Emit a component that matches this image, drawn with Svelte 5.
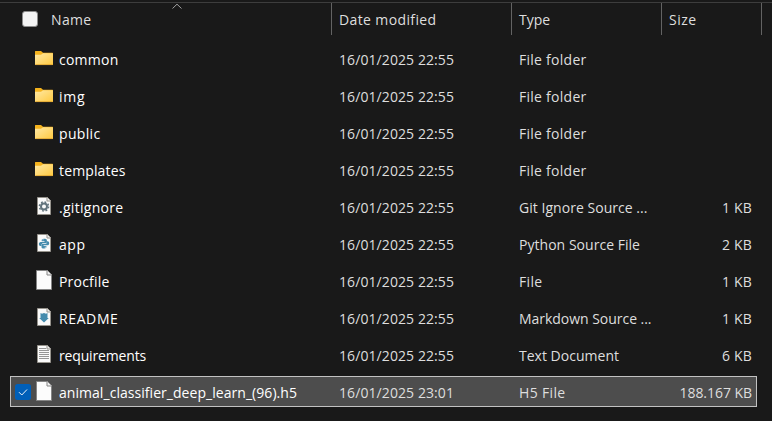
<script>
  const columns = [
    { label: 'Name', w: 40.5 },
    { label: 'Date modified', w: 97.5 },
    { label: 'Type', w: 31 },
    { label: 'Size', w: 27.5 }
  ];
  const date = '16/01/2025 22:55';
  const folder = { icon: 'folder', date, type: 'File folder', tw: 67.5, size: '' };
  const files = [
    { ...folder, name: 'common', w: 59.5 },
    { ...folder, name: 'img', w: 26.5 },
    { ...folder, name: 'public', w: 41.5 },
    { ...folder, name: 'templates', w: 66.5 },
    { icon: 'gear', name: '.gitignore', w: 64.5, date, type: 'Git Ignore Source ...', tw: 128.5, size: '1 KB' },
    { icon: 'python', name: 'app', w: 26.5, date, type: 'Python Source File', tw: 121, size: '2 KB' },
    { icon: 'blank', name: 'Procfile', w: 50.5, date, type: 'File', tw: 23.5, size: '1 KB' },
    { icon: 'markdown', name: 'README', w: 59.5, date, type: 'Markdown Source ...', tw: 132.5, size: '1 KB' },
    { icon: 'text', name: 'requirements', w: 87, date, type: 'Text Document', tw: 100, size: '6 KB' },
    { icon: 'blank', name: 'animal_classifier_deep_learn_(96).h5', w: 238, date: '16/01/2025 23:01', type: 'H5 File', tw: 46.5, size: '188.167 KB', selected: true }
  ];

  // Spreads the letters of a label over the given width.
  function fit(node, width) {
    const natural = node.getBoundingClientRect().width;
    if (natural) node.style.letterSpacing = `${(width - natural) / node.textContent.length}px`;
  }
</script>

{#snippet icon(kind)}
  {#if kind === 'folder'}
    <svg width="20" height="20" viewBox="0 0 20 20">
      <defs>
        <linearGradient id="fold" x1="0" y1="0" x2="1" y2="1">
          <stop offset="0" stop-color="#ffe9a6" /><stop offset="1" stop-color="#ffc93f" />
        </linearGradient>
      </defs>
      <path d="M1 3.5Q1 3 1.5 3H7l2 1.7h9.5q.5 0 .5.5V9H1Z" fill="#f5b31d" />
      <path d="M1 6.7h6L9 5.2h9.5q.5 0 .5.5v10.8q0 .5-.5.5h-17q-.5 0-.5-.5Z" fill="url(#fold)" />
      <path d="M1.3 16.6h17.4" stroke="#dda12e" stroke-width=".8" />
    </svg>
  {:else if kind === 'blank'}
    <svg width="20" height="20" viewBox="-1 0 20 20">
      <path d="M1.5 .5h11l4 4v15h-15Z" fill="#fcfcfc" stroke="#858585" />
      <path d="M12 .5V5h4.5" fill="#f0f0f0" stroke="#858585" />
    </svg>
  {:else}
    <svg width="20" height="20" viewBox="-1 0 20 20">
      <path d="M2.5 1.5h10l3 3v14h-13Z" fill="#fafafa" stroke="#96938c" />
      <path d="M12 1.5V5h3.5" fill="#eee" stroke="#96938c" />
      {#if kind === 'gear'}
        <circle cx="9" cy="10.5" r="4.6" fill="none" stroke="#62747d" stroke-width="1.5" stroke-dasharray="1.8 1.813" />
        <circle cx="9" cy="10.5" r="3" fill="none" stroke="#62747d" stroke-width="2" />
      {:else if kind === 'python'}
        <path d="M9 5.7c-2 0-2.3.8-2.3 1.5v1.1h2.8v.6H5.7c-1.2 0-1.8 1-1.8 2.1s.6 2 1.5 2h1.1v-1.2c0-1 .8-1.6 1.7-1.6h2.4c.8 0 1.3-.6 1.3-1.3V7.2c0-1-1-1.5-2.9-1.5Z" fill="#458bad" />
        <path d="M9.1 15.5c2 0 2.3-.8 2.3-1.5v-1.1H8.6v-.6h3.8c1.2 0 1.8-1 1.8-2.1s-.6-2-1.5-2h-1v1.2c0 1-.8 1.6-1.7 1.6H7.8c-.8 0-1.3.6-1.3 1.3V14c0 1 .8 1.5 2.6 1.5Z" fill="#458bad" />
        <path d="M7.5 6.8h1M9.8 14.3h1" stroke="#fff" stroke-width=".8" />
      {:else if kind === 'markdown'}
        <path d="M5.5 6l1.5.8L9 6l2 .8 1.5-.8v5h1.3L9 15.5 4.2 11h1.3Z" fill="#458bad" />
      {:else}
        <path d="M4 4.5h7M4 6.5h10M4 8.5h10M4 10.5h10M4 12.5h10M4 14.5h10" stroke="#969696" />
      {/if}
    </svg>
  {/if}
{/snippet}

<main>
  <header>
    {#each columns as c, i}
      <div class="head c{i}">
        {#if i === 0}<span class="box"></span>{/if}
        <span class="label" use:fit={c.w}>{c.label}</span>
        {#if i === 0}
          <svg class="sort" width="12" height="7" viewBox="0 0 12 7"><path d="M1.5 5.5L6 1.2l4.5 4.3" fill="none" stroke="#a0a0a0" /></svg>
        {/if}
      </div>
    {/each}
  </header>

  <div class="list">
    {#each files as f}
      <div class="row" class:selected={f.selected}>
        <div class="check">
          {#if f.selected}
            <svg width="16" height="16" viewBox="0 0 16 16"><rect width="16" height="16" rx="2.5" fill="#005fb8" /><path d="M4 8.2l2.8 2.8L12 5.5" fill="none" stroke="#e8f1fa" /></svg>
          {/if}
        </div>
        <div class="icon">{@render icon(f.icon)}</div>
        <div class="cell name"><span class="label" use:fit={f.w}>{f.name}</span></div>
        <div class="cell date"><span class="label" use:fit={115}>{f.date}</span></div>
        <div class="cell type"><span class="label" use:fit={f.tw}>{f.type}</span></div>
        <div class="cell size"><span class="label" use:fit={f.selected ? 72.5 : 30}>{f.size}</span></div>
      </div>
    {/each}
  </div>
</main>

<style>
  :global(body) { background: #191919; }
  main {
    box-sizing: border-box;
    width: 772px;
    height: 421px;
    padding-top: 2px;
    background: #191919;
    color: #dedede;
    font: 14px/20px "Open Sans", "Noto Sans", sans-serif;
    overflow: hidden;
  }
  svg { display: block; }
  .label { display: inline-block; white-space: pre; }
  header { display: flex; height: 32px; border-top: 1px solid #3d3d3d; }
  .head {
    position: relative;
    box-sizing: border-box;
    display: flex;
    align-items: flex-start;
    height: 32px;
    padding: 7px 0 0 7px;
    border-right: 1px solid #636363;
  }
  .c0 { width: 332px; padding-left: 22px; }
  .c1 { width: 180px; }
  .c2 { width: 150px; }
  .c3 { width: 100px; }
  .box {
    box-sizing: border-box;
    width: 16px;
    height: 16px;
    margin: 1px 13px 0 0;
    border: 1px solid #8b8b8b;
    border-radius: 3px;
    background: #f3f3f3;
  }
  .sort { position: absolute; left: 170.5px; top: 0; }
  .list { display: flex; flex-direction: column; gap: 6px; padding: 8px 0 0 10px; }
  .row {
    box-sizing: border-box;
    display: flex;
    align-items: center;
    width: 747px;
    height: 31px;
    padding: 1px 4px 0;
    border: 1px solid transparent;
  }
  .selected { background: #4d4d4d; border-color: #c2c2c2; }
  .check { width: 19px; }
  .icon { width: 25px; margin-top: -2px; }
  .cell { padding-top: 2px; }
  .name { width: 280px; color: #fff; }
  .date { width: 180px; }
  .type { width: 150px; }
  .size { flex: 1; text-align: right; }
</style>
